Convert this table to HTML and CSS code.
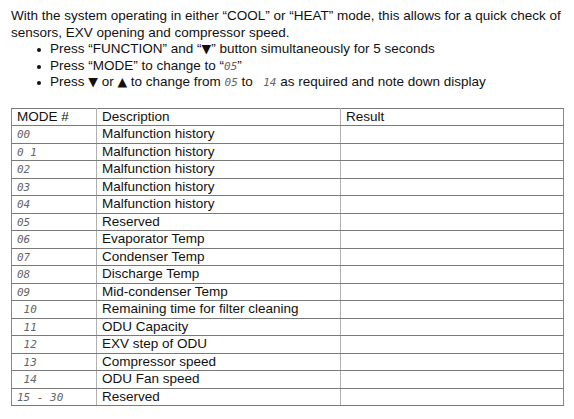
FILE: index.html
```html
<!DOCTYPE html>
<html>
<head>
<meta charset="utf-8">
<link rel="stylesheet" href="styles.css">
</head>
<body>
<div class="page">
  <p class="intro">With the system operating in either “COOL” or “HEAT” mode, this allows for a quick check of sensors, EXV opening and compressor speed.</p>
  <ul class="steps">
    <li>Press “FUNCTION” and “<span class="tri">▼</span>” button simultaneously for 5 seconds</li>
    <li>Press “MODE” to change to “<span class="lcd">05</span>”</li>
    <li>Press <span class="tri">▼</span> or <span class="tri">▲</span> to change from <span class="lcd">05</span> to <span class="lcd"> 14</span> as required and note down display</li>
  </ul>
  <table class="modes">
    <colgroup><col class="c1"><col class="c2"><col class="c3"></colgroup>
    <tr><td>MODE #</td><td>Description</td><td>Result</td></tr>
    <tr><td><span class="lcd">00</span></td><td>Malfunction history</td><td></td></tr>
    <tr><td><span class="lcd">0 1</span></td><td>Malfunction history</td><td></td></tr>
    <tr><td><span class="lcd">02</span></td><td>Malfunction history</td><td></td></tr>
    <tr><td><span class="lcd">03</span></td><td>Malfunction history</td><td></td></tr>
    <tr><td><span class="lcd">04</span></td><td>Malfunction history</td><td></td></tr>
    <tr><td><span class="lcd">05</span></td><td>Reserved</td><td></td></tr>
    <tr><td><span class="lcd">06</span></td><td>Evaporator Temp</td><td></td></tr>
    <tr><td><span class="lcd">07</span></td><td>Condenser Temp</td><td></td></tr>
    <tr><td><span class="lcd">08</span></td><td>Discharge Temp</td><td></td></tr>
    <tr><td><span class="lcd">09</span></td><td>Mid-condenser Temp</td><td></td></tr>
    <tr><td><span class="lcd"> 10</span></td><td>Remaining time for filter cleaning</td><td></td></tr>
    <tr><td><span class="lcd"> 11</span></td><td>ODU Capacity</td><td></td></tr>
    <tr><td><span class="lcd"> 12</span></td><td>EXV step of ODU</td><td></td></tr>
    <tr><td><span class="lcd"> 13</span></td><td>Compressor speed</td><td></td></tr>
    <tr><td><span class="lcd"> 14</span></td><td>ODU Fan speed</td><td></td></tr>
    <tr><td><span class="lcd">15 - 30</span></td><td>Reserved</td><td></td></tr>
  </table>
</div>
</body>
</html>
```
FILE: styles.css
```css
html, body {
  margin: 0;
  padding: 0;
  background: #fff;
}
.page {
  padding: 8px 11px 0 11px;
  font-family: "Liberation Sans", Arial, sans-serif;
  font-size: 13.5px;
  line-height: 16.5px;
  color: #111;
}
.intro {
  margin: 0;
  width: 560px;
}
.steps {
  list-style: none;
  margin: 0;
  padding: 0 0 0 26px;
}
.steps li {
  position: relative;
  padding-left: 13px;
}
.steps li::before {
  content: "";
  position: absolute;
  left: 0;
  top: 7px;
  width: 4px;
  height: 4px;
  border-radius: 50%;
  background: #111;
}
.tri {
  font-family: "DejaVu Sans", sans-serif;
  font-size: 12.5px;
  line-height: 0;
}
.lcd {
  font-family: "DejaVu Sans Mono", monospace;
  font-style: italic;
  font-size: 11px;
  line-height: 0;
  color: #666;
  white-space: pre;
}
.modes {
  margin-top: 17px;
  border-collapse: collapse;
  width: 552px;
  table-layout: fixed;
}
.c1 { width: 85px; }
.c2 { width: 244px; }
.c3 { width: 223px; }
.modes td {
  height: 16.5px;
  padding: 0 0 0 5px;
  border-top: 1px solid #7a7a7a;
  border-bottom: 1px solid #7a7a7a;
  border-left: 1px solid #b0b0b0;
  border-right: 1px solid #b0b0b0;
  line-height: 16px;
  vertical-align: middle;
  white-space: nowrap;
}
.modes td:first-child { border-left-color: #888; }
.modes td:last-child { border-right-color: #888; }
.modes td:nth-child(2) { border-left-color: #666; }
```
